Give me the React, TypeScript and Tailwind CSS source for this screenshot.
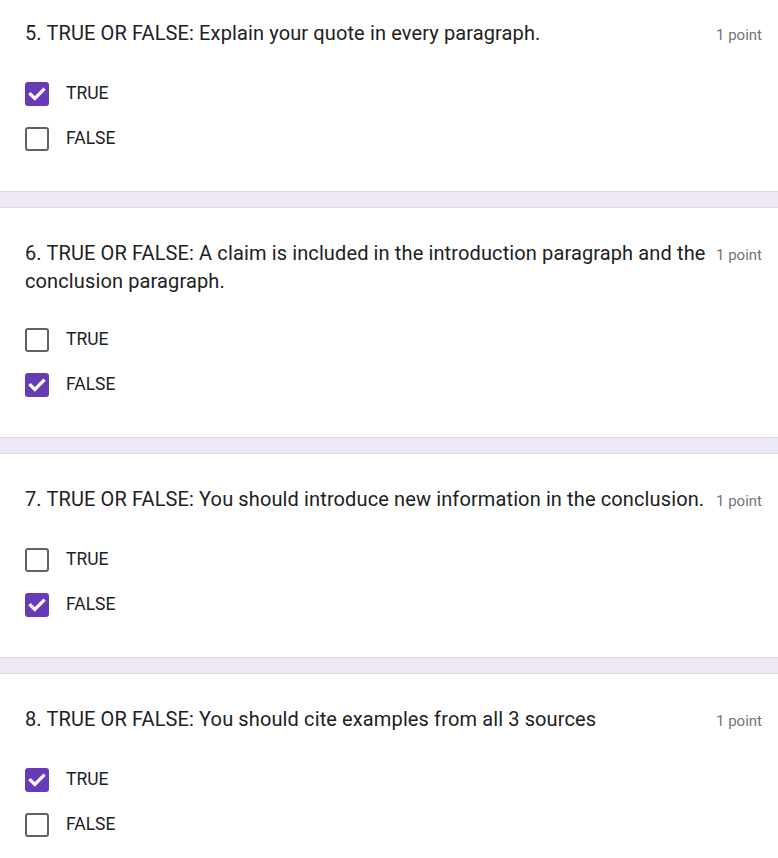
import React from "react";

type Q = { title: string; checked: [boolean, boolean]; first?: boolean };

const questions: Q[] = [
  { title: "5. TRUE OR FALSE: Explain your quote in every paragraph.", checked: [true, false], first: true },
  { title: "6. TRUE OR FALSE: A claim is included in the introduction paragraph and the conclusion paragraph.", checked: [false, true] },
  { title: "7. TRUE OR FALSE: You should introduce new information in the conclusion.", checked: [false, true] },
  { title: "8. TRUE OR FALSE: You should cite examples from all 3 sources", checked: [true, false] },
];

const font = { fontFamily: "Roboto, 'Liberation Sans', sans-serif" };

function Box({ checked }: { checked: boolean }) {
  if (checked) {
    return (
      <div className="w-6 h-6 rounded-[3px] bg-[#673ab7] flex items-center justify-center shrink-0">
        <svg width="24" height="24" viewBox="0 0 24 24">
          <path d="M5.5 12.2l4.3 4.3L18.5 7.8" fill="none" stroke="#fff" strokeWidth="3.2" strokeLinecap="square" />
        </svg>
      </div>
    );
  }
  return <div className="w-6 h-6 rounded-[3px] border-2 border-[#5f6368] bg-white shrink-0" />;
}

function Card({ q }: { q: Q }) {
  return (
    <div
      className={
        "bg-white border-b border-[#dadce0] pl-[25px] pr-[16px] pb-[30px] " +
        (q.first ? "pt-[19px]" : "pt-[31px] border-t")
      }
    >
      <div className="flex items-start gap-[7px]">
        <div className="flex-1 text-[20px] leading-[28px] tracking-[0.12px] text-[#202124]" style={font}>
          {q.title}
        </div>
        <div className="shrink-0 text-[15px] leading-[28px] text-[#70757a] pt-[2px]" style={font}>
          1 point
        </div>
      </div>
      <div className="mt-[22px] flex flex-col">
        {["TRUE", "FALSE"].map((label, i) => (
          <div key={label} className="h-[45px] flex items-center">
            <Box checked={q.checked[i]} />
            <span className="ml-[17px] text-[17.5px] text-[#202124]" style={font}>
              {label}
            </span>
          </div>
        ))}
      </div>
    </div>
  );
}

export default function App() {
  return (
    <div className="w-[778px] min-h-[858px] bg-[#ede7f6] flex flex-col gap-[15px]">
      {questions.map((q, i) => (
        <Card key={i} q={q} />
      ))}
    </div>
  );
}
